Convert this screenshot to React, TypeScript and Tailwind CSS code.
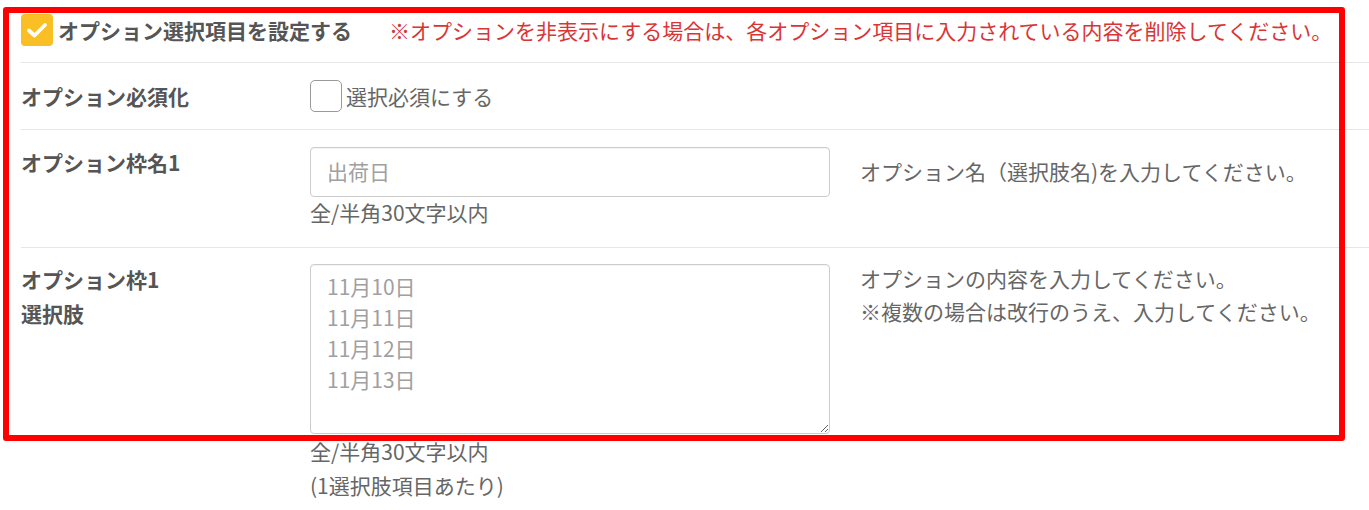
import React from "react";

function YellowCheck() {
  return (
    <div className="w-[32px] h-[32px] rounded-[4px] bg-[#f9bf25] flex items-center justify-center shrink-0">
      <svg width="22" height="18" viewBox="0 0 22 18" fill="none">
        <path d="M3 9.5 L8.5 14.5 L19 4" stroke="#ffffff" strokeWidth="3.8" strokeLinecap="round" strokeLinejoin="round" />
      </svg>
    </div>
  );
}

export default function App() {
  return (
    <div className="relative w-[1369px] h-[510px] bg-white overflow-hidden font-['Noto_Sans_CJK_JP',sans-serif] text-[21px] text-[#555]">
      <div className="pl-[21px] pt-[14px]">
        {/* Row 1 */}
        <div className="flex items-center border-b border-[#e6e6e6] pb-[16px]">
          <YellowCheck />
          <span className="ml-[5px] font-bold text-[#555] leading-[32px]">オプション選択項目を設定する</span>
          <span className="ml-[37px] text-[#d93535] leading-[32px]">※オプションを非表示にする場合は、各オプション項目に入力されている内容を削除してください。</span>
        </div>

        {/* Row 2 */}
        <div className="flex items-center h-[67px] border-b border-[#e6e6e6]">
          <div className="w-[289px] font-bold leading-[30px]">オプション必須化</div>
          <div className="flex items-center">
            <div className="w-[32px] h-[32px] rounded-[5px] border border-[#9a9a9a] bg-white" />
            <span className="ml-[4px] text-[#666] leading-[30px]">選択必須にする</span>
          </div>
        </div>

        {/* Row 3 */}
        <div className="flex pt-[17px] pb-[20px] border-b border-[#e6e6e6]">
          <div className="w-[289px] font-bold leading-[30px]">オプション枠名1</div>
          <div className="w-[520px] flex flex-col">
            <div className="h-[50px] rounded-[4px] border border-[#cccccc] shadow-[inset_0_1px_1px_rgba(0,0,0,0.05)] flex items-center px-[16px] text-[#a0a0a0]">
              出荷日
            </div>
            <div className="leading-[30px] text-[#666]">全/半角30文字以内</div>
          </div>
          <div className="ml-[30px] mt-[9px] leading-[30px] text-[#666]">オプション名（選択肢名)を入力してください。</div>
        </div>

        {/* Row 4 */}
        <div className="flex pt-[14px]">
          <div className="w-[289px] font-bold leading-[34px]">
            <div>オプション枠1</div>
            <div>選択肢</div>
          </div>
          <div className="w-[520px] flex flex-col mt-[2px]">
            <textarea
              readOnly
              className="h-[170px] w-full rounded-[4px] border border-[#cccccc] shadow-[inset_0_1px_1px_rgba(0,0,0,0.05)] px-[16px] pt-[6px] leading-[31px] text-[#a0a0a0] text-[21px] font-['Noto_Sans_CJK_JP',sans-serif] outline-none"
              value={"11月10日\n11月11日\n11月12日\n11月13日"}
            />
            <div className="leading-[34px] text-[#666]">
              <div>全/半角30文字以内</div>
              <div>(1選択肢項目あたり)</div>
            </div>
          </div>
          <div className="ml-[30px] leading-[33px] text-[#666]">
            <div>オプションの内容を入力してください。</div>
            <div>※複数の場合は改行のうえ、入力してください。</div>
          </div>
        </div>
      </div>

      <div className="absolute left-[3px] top-[7px] w-[1342px] h-[434px] border-[6px] border-[#ff0000] rounded-[3px] pointer-events-none" />
    </div>
  );
}
